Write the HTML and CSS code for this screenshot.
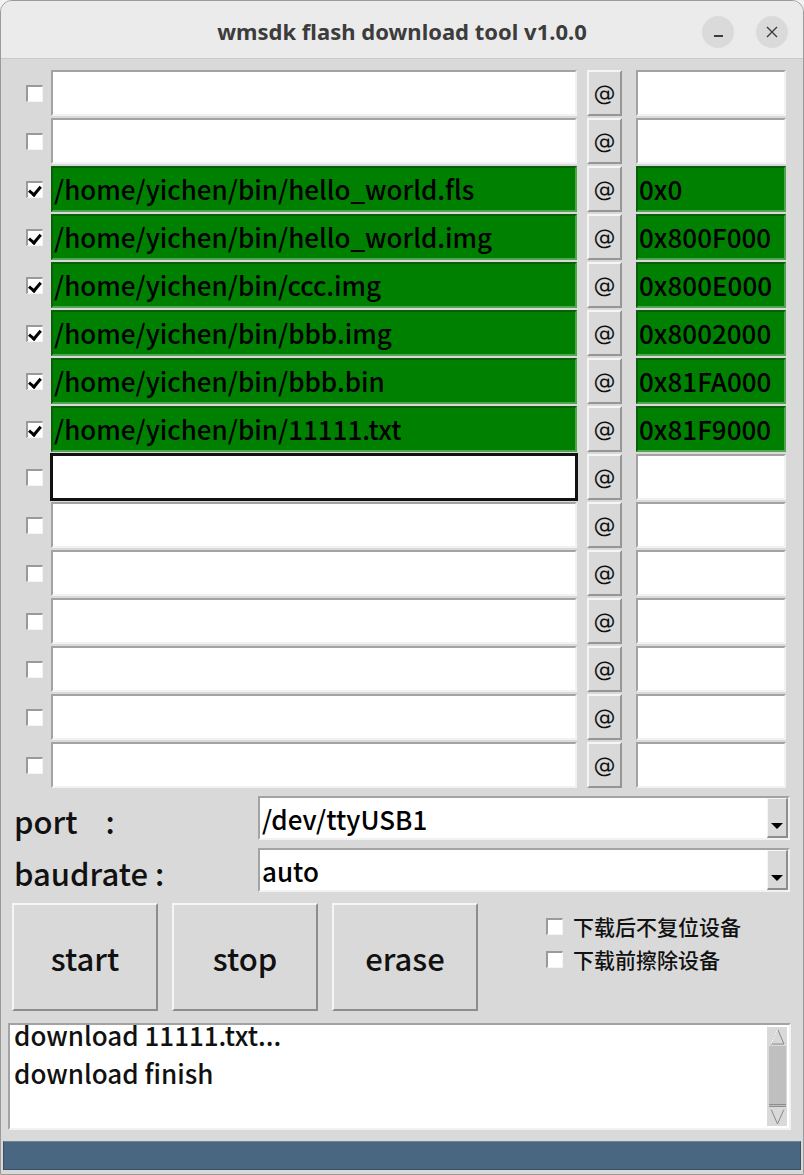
FILE: index.html
```html
<!DOCTYPE html>
<html lang="zh-CN">
<head>
    <meta charset="UTF-8">
    <meta name="viewport" content="width=device-width, initial-scale=1.0">
    <title>wmsdk flash download tool v1.0.0</title>
    <link rel="stylesheet" href="styles.css">
</head>
<body>
    <div class="window">
        <header class="titlebar">
            <span class="title">wmsdk flash download tool v1.0.0</span>
            <div class="controls">
                <span class="ctl min"></span>
                <span class="ctl close">
                    <svg width="12" height="12" viewBox="0 0 12 12"><path d="M1 1 L11 11 M11 1 L1 11" stroke="#3c3c3c" stroke-width="1.4"/></svg>
                </span>
            </div>
        </header>

        <main class="content">
            <div class="files">
                <div class="file-row">
                    <span class="check"></span>
                    <div class="entry path"></div>
                    <span class="at-btn">@</span>
                    <div class="entry addr"></div>
                </div>
                <div class="file-row">
                    <span class="check"></span>
                    <div class="entry path"></div>
                    <span class="at-btn">@</span>
                    <div class="entry addr"></div>
                </div>
                <div class="file-row">
                    <span class="check checked"></span>
                    <div class="entry path used">/home/yichen/bin/hello_world.fls</div>
                    <span class="at-btn">@</span>
                    <div class="entry addr used">0x0</div>
                </div>
                <div class="file-row">
                    <span class="check checked"></span>
                    <div class="entry path used">/home/yichen/bin/hello_world.img</div>
                    <span class="at-btn">@</span>
                    <div class="entry addr used">0x800F000</div>
                </div>
                <div class="file-row">
                    <span class="check checked"></span>
                    <div class="entry path used">/home/yichen/bin/ccc.img</div>
                    <span class="at-btn">@</span>
                    <div class="entry addr used">0x800E000</div>
                </div>
                <div class="file-row">
                    <span class="check checked"></span>
                    <div class="entry path used">/home/yichen/bin/bbb.img</div>
                    <span class="at-btn">@</span>
                    <div class="entry addr used">0x8002000</div>
                </div>
                <div class="file-row">
                    <span class="check checked"></span>
                    <div class="entry path used">/home/yichen/bin/bbb.bin</div>
                    <span class="at-btn">@</span>
                    <div class="entry addr used">0x81FA000</div>
                </div>
                <div class="file-row">
                    <span class="check checked"></span>
                    <div class="entry path used">/home/yichen/bin/11111.txt</div>
                    <span class="at-btn">@</span>
                    <div class="entry addr used">0x81F9000</div>
                </div>
                <div class="file-row">
                    <span class="check"></span>
                    <div class="entry path focused"></div>
                    <span class="at-btn">@</span>
                    <div class="entry addr"></div>
                </div>
                <div class="file-row">
                    <span class="check"></span>
                    <div class="entry path"></div>
                    <span class="at-btn">@</span>
                    <div class="entry addr"></div>
                </div>
                <div class="file-row">
                    <span class="check"></span>
                    <div class="entry path"></div>
                    <span class="at-btn">@</span>
                    <div class="entry addr"></div>
                </div>
                <div class="file-row">
                    <span class="check"></span>
                    <div class="entry path"></div>
                    <span class="at-btn">@</span>
                    <div class="entry addr"></div>
                </div>
                <div class="file-row">
                    <span class="check"></span>
                    <div class="entry path"></div>
                    <span class="at-btn">@</span>
                    <div class="entry addr"></div>
                </div>
                <div class="file-row">
                    <span class="check"></span>
                    <div class="entry path"></div>
                    <span class="at-btn">@</span>
                    <div class="entry addr"></div>
                </div>
                <div class="file-row">
                    <span class="check"></span>
                    <div class="entry path"></div>
                    <span class="at-btn">@</span>
                    <div class="entry addr"></div>
                </div>
            </div>

            <div class="field">
                <label class="field-label">port&nbsp;&nbsp;&nbsp;&nbsp;:</label>
                <div class="combo">
                    <span class="combo-value">/dev/ttyUSB1</span>
                    <span class="combo-arrow"><i></i></span>
                </div>
            </div>
            <div class="field">
                <label class="field-label">baudrate :</label>
                <div class="combo">
                    <span class="combo-value">auto</span>
                    <span class="combo-arrow"><i></i></span>
                </div>
            </div>

            <div class="actions">
                <button class="big-btn">start</button>
                <button class="big-btn">stop</button>
                <button class="big-btn">erase</button>
                <div class="options">
                    <div class="option"><span class="check"></span>下载后不复位设备</div>
                    <div class="option"><span class="check"></span>下载前擦除设备</div>
                </div>
            </div>

            <div class="log">
                <div class="log-text">
                    <div>download 11111.txt...</div>
                    <div>download finish</div>
                </div>
                <div class="scrollbar">
                    <svg class="arrow" width="17" height="19" viewBox="0 0 17 19"><path d="M8.5 2 L15 17 L2 17 Z" fill="#d9d9d9" stroke="#8a8a8a" stroke-width="1"/><path d="M8.5 2 L2 17" stroke="#fff" stroke-width="1"/></svg>
                    <div class="thumb"></div>
                    <svg class="arrow" width="17" height="19" viewBox="0 0 17 19"><path d="M8.5 17 L15 2 L2 2 Z" fill="#d9d9d9" stroke="#8a8a8a" stroke-width="1"/><path d="M2 2 L15 2" stroke="#fff" stroke-width="1"/></svg>
                </div>
            </div>

            <div class="status"></div>
        </main>
    </div>
</body>
</html>
```

FILE: styles.css
```css
* {
    margin: 0;
    padding: 0;
    box-sizing: border-box;
}

body {
    background: #f2f2f2;
    font-family: "Noto Sans CJK SC", "Noto Sans", sans-serif;
    font-weight: 500;
    color: #000;
}

.window {
    width: 804px;
    height: 1175px;
    border: 1px solid #9a9a9a;
    border-radius: 12px 12px 0 0;
    overflow: hidden;
    background: #d9d9d9;
    display: flex;
    flex-direction: column;
}

/* title bar */
.titlebar {
    height: 58px;
    flex-shrink: 0;
    background: #ebebeb;
    border-bottom: 1px solid #c9c9c9;
    display: flex;
    align-items: center;
    justify-content: center;
    position: relative;
}

.title {
    font-family: "Noto Sans", "DejaVu Sans", sans-serif;
    font-weight: bold;
    font-size: 22px;
    color: #3c3c3c;
    margin-top: 3px;
}

.controls {
    position: absolute;
    right: 15px;
    top: 15px;
    display: flex;
    gap: 22px;
}

.ctl {
    width: 32px;
    height: 32px;
    border-radius: 50%;
    background: #dadada;
    display: flex;
    align-items: center;
    justify-content: center;
}

.ctl.min::before {
    content: '';
    width: 9px;
    height: 2px;
    background: #3c3c3c;
    margin-top: 8px;
}

/* main area */
.content {
    flex: 1;
    display: flex;
    flex-direction: column;
    padding-top: 11px;
}

.files {
    display: flex;
    flex-direction: column;
    gap: 2px;
}

.file-row {
    display: flex;
    align-items: center;
    height: 46px;
    padding-left: 25px;
}

.check {
    width: 17px;
    height: 17px;
    flex-shrink: 0;
    background: #fff;
    border-top: 2px solid #9a9a9a;
    border-left: 2px solid #9a9a9a;
    border-bottom: 1px solid #f4f4f4;
    border-right: 1px solid #f4f4f4;
    position: relative;
}

.check.checked::after {
    content: '';
    position: absolute;
    left: 2px;
    top: 1px;
    width: 5px;
    height: 9px;
    border-right: 3px solid #000;
    border-bottom: 3px solid #000;
    transform: rotate(40deg);
    transform-origin: 60% 60%;
}

.entry {
    height: 46px;
    background: #fff;
    border-top: 2px solid #a3a3a3;
    border-left: 2px solid #a3a3a3;
    border-bottom: 2px solid #f2f2f2;
    border-right: 2px solid #f2f2f2;
    font-size: 26px;
    line-height: 41px;
    padding-left: 1px;
    white-space: nowrap;
    overflow: hidden;
}

.entry.path {
    width: 526px;
    margin-left: 8px;
}

.entry.addr {
    width: 150px;
    margin-left: 14px;
}

.entry.used {
    background: #008000;
    border-top-color: #0a5e0a;
    border-left-color: #0a5e0a;
    border-bottom-color: #4fa64f;
    border-right-color: #4fa64f;
    color: #000;
}

.entry.focused {
    border-color: #111;
    box-shadow: 0 0 0 1px #111;
}

.at-btn {
    width: 35px;
    height: 46px;
    margin-left: 10px;
    flex-shrink: 0;
    background: #d9d9d9;
    border-top: 2px solid #f5f5f5;
    border-left: 2px solid #f5f5f5;
    border-bottom: 2px solid #959595;
    border-right: 2px solid #959595;
    font-family: "DejaVu Sans", sans-serif;
    font-weight: normal;
    font-size: 22px;
    color: #111;
    display: flex;
    align-items: center;
    justify-content: center;
}

/* port / baudrate */
.field {
    display: flex;
    align-items: center;
    height: 44px;
    padding-left: 13px;
    margin-top: 8px;
}

.field:first-of-type {
    margin-top: 10px;
}

.field-label {
    width: 244px;
    font-size: 31px;
    color: #111;
    white-space: pre;
    padding-top: 4px;
}

.combo {
    width: 532px;
    height: 44px;
    background: #fff;
    border-top: 2px solid #a3a3a3;
    border-left: 2px solid #a3a3a3;
    border-bottom: 2px solid #f2f2f2;
    border-right: 2px solid #f2f2f2;
    display: flex;
    align-items: center;
    justify-content: space-between;
}

.combo-value {
    font-size: 26px;
    padding-left: 2px;
}

.combo-arrow {
    width: 21px;
    height: 40px;
    background: #d9d9d9;
    border-top: 1px solid #f5f5f5;
    border-left: 1px solid #f5f5f5;
    border-bottom: 2px solid #8d8d8d;
    border-right: 2px solid #8d8d8d;
    display: flex;
    align-items: flex-end;
    justify-content: center;
    padding-bottom: 7px;
}

.combo-arrow i {
    width: 0;
    height: 0;
    border-left: 6px solid transparent;
    border-right: 6px solid transparent;
    border-top: 6px solid #000;
}

/* buttons + options */
.actions {
    display: flex;
    align-items: flex-start;
    margin-top: 11px;
    padding-left: 11px;
    gap: 14px;
}

.big-btn {
    width: 146px;
    height: 108px;
    background: #d9d9d9;
    border-top: 2px solid #f5f5f5;
    border-left: 2px solid #f5f5f5;
    border-bottom: 2px solid #8d8d8d;
    border-right: 2px solid #8d8d8d;
    font-family: "Noto Sans CJK SC", "Noto Sans", sans-serif;
    font-weight: 500;
    font-size: 31px;
    color: #111;
}

.options {
    margin-left: 54px;
    padding-top: 13px;
    display: flex;
    flex-direction: column;
    gap: 12px;
}

.option {
    display: flex;
    align-items: center;
    gap: 10px;
    font-size: 21px;
    line-height: 21px;
    color: #111;
}

/* log */
.log {
    width: 783px;
    height: 107px;
    margin: 12px 0 0 7px;
    background: #fff;
    border-top: 2px solid #a3a3a3;
    border-left: 2px solid #a3a3a3;
    border-bottom: 2px solid #f2f2f2;
    border-right: 2px solid #f2f2f2;
    display: flex;
    overflow: hidden;
}

.log-text {
    flex: 1;
    font-size: 26px;
    line-height: 38px;
    padding-left: 4px;
    margin-top: -9px;
    color: #111;
}

.scrollbar {
    width: 20px;
    margin: 2px 2px 2px 0;
    background: #d9d9d9;
    display: flex;
    flex-direction: column;
    align-items: center;
}

.scrollbar .thumb {
    flex: 1;
    width: 17px;
    background: #bfbfbf;
    border-bottom: 3px double #8d8d8d;
}

/* status bar */
.status {
    width: 798px;
    height: 29px;
    margin: 11px 0 0 2px;
    background: #4a6781;
    border: 1px solid #3a5066;
    border-top-color: #6e8599;
}
```
